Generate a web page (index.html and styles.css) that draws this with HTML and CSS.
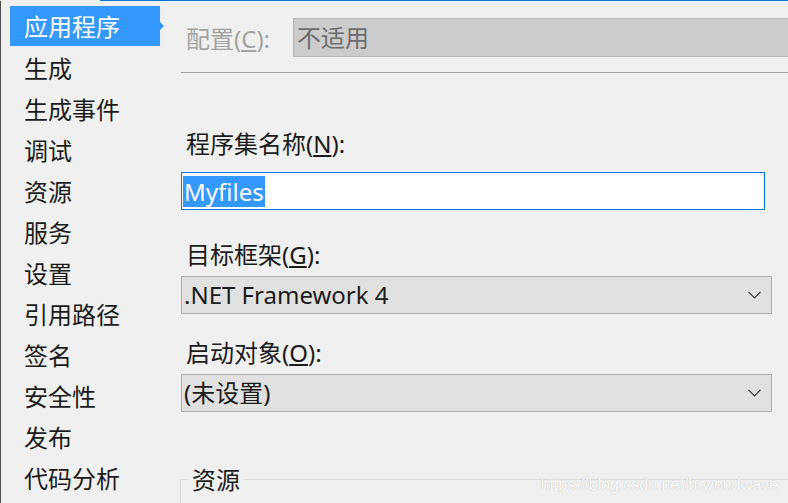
FILE: index.html
```html
<!DOCTYPE html>
<html lang="zh-CN">
<head>
<meta charset="utf-8">
<title>应用程序</title>
<link rel="stylesheet" href="styles.css">
</head>
<body>
<div class="topline"></div>
<div class="window">
  <nav class="sidebar">
    <div class="nav-item active">应用程序</div>
    <div class="nav-item">生成</div>
    <div class="nav-item">生成事件</div>
    <div class="nav-item">调试</div>
    <div class="nav-item">资源</div>
    <div class="nav-item">服务</div>
    <div class="nav-item">设置</div>
    <div class="nav-item">引用路径</div>
    <div class="nav-item">签名</div>
    <div class="nav-item">安全性</div>
    <div class="nav-item">发布</div>
    <div class="nav-item">代码分析</div>
  </nav>
  <main class="panel">
    <div class="config-row">
      <span class="config-label">配置(<u>C</u>):</span>
      <div class="config-box">不适用</div>
    </div>
    <div class="separator"></div>

    <div class="label label-first">程序集名称(<u>N</u>):</div>
    <div class="textbox"><span class="selection">Myfiles</span></div>

    <div class="label label-next">目标框架(<u>G</u>):</div>
    <div class="combo">
      <span class="combo-text">.NET Framework 4</span>
      <svg class="chevron" width="13" height="8" viewBox="0 0 13 8"><polyline points="0.5,0.8 6.5,6.8 12.5,0.8" fill="none" stroke="#333" stroke-width="1.2"/></svg>
    </div>

    <div class="label label-next2">启动对象(<u>O</u>):</div>
    <div class="combo">
      <span class="combo-text">(未设置)</span>
      <svg class="chevron" width="13" height="8" viewBox="0 0 13 8"><polyline points="0.5,0.8 6.5,6.8 12.5,0.8" fill="none" stroke="#333" stroke-width="1.2"/></svg>
    </div>

    <fieldset class="group">
      <legend class="group-title">资源</legend>
    </fieldset>
  </main>
</div>
<div class="watermark">https://blog.csdn.net/beyondwave</div>
</body>
</html>
```

FILE: styles.css
```css
html, body {
  margin: 0;
  padding: 0;
}

body {
  width: 788px;
  height: 503px;
  overflow: hidden;
  background: #f0f0f0;
  font-family: "Noto Sans", "Noto Sans CJK SC", sans-serif;
  font-size: 24px;
  color: #1b1b1b;
  position: relative;
}

.topline {
  height: 1px;
  margin-left: 100px;
  background: #0078d7;
}

.window {
  display: flex;
  height: 502px;
}

.sidebar {
  flex: none;
  width: 160px;
  box-sizing: border-box;
  border-left: 1px solid #4d4d4d;
  padding-top: 5px;
}

.nav-item {
  position: relative;
  height: 41px;
  line-height: 43px;
  margin-left: 9px;
  padding-left: 14px;
  white-space: nowrap;
}

.nav-item.active {
  background: #3399ff;
  color: #ffffff;
  height: 40px;
  line-height: 42px;
  margin-bottom: 1px;
}

.nav-item.active::after {
  content: "";
  position: absolute;
  right: -4px;
  top: 16px;
  border-left: 4px solid #3399ff;
  border-top: 4px solid transparent;
  border-bottom: 4px solid transparent;
}

.panel {
  flex: 1;
  display: flex;
  flex-direction: column;
  padding-left: 21px;
  min-width: 0;
}

.config-row {
  display: flex;
  align-items: center;
  margin-top: 17px;
  height: 39px;
  margin-right: -10px;
}

.config-label {
  width: 112px;
  flex: none;
  padding-left: 5px;
  box-sizing: border-box;
  color: #a3a3a3;
  white-space: nowrap;
}

.config-box {
  flex: 1;
  height: 39px;
  box-sizing: border-box;
  background: #cccccc;
  border: 1px solid #b8b8b8;
  line-height: 37px;
  padding-left: 3px;
  color: #6d6d6d;
}

.separator {
  margin-top: 15px;
  height: 1px;
  background: #a0a0a0;
  margin-right: -10px;
}

.label {
  height: 34px;
  line-height: 34px;
  padding-left: 5px;
  white-space: nowrap;
}

.label-first {
  margin-top: 54px;
}

.label-next {
  margin-top: 28px;
}

.label-next2 {
  margin-top: 22px;
}

.textbox {
  margin-top: 11px;
  width: 584px;
  height: 38px;
  box-sizing: border-box;
  background: #ffffff;
  border: 1px solid #0078d7;
  padding: 2px 1px;
}

.selection {
  display: inline-block;
  height: 31px;
  line-height: 31px;
  padding: 0 1px;
  background: #3399ff;
  color: #ffffff;
}

.combo {
  margin-top: 4px;
  width: 591px;
  height: 38px;
  box-sizing: border-box;
  background: #e1e1e1;
  border: 1px solid #adadad;
  display: flex;
  align-items: center;
  justify-content: space-between;
  padding: 0 10px 0 2px;
  line-height: 36px;
}

.combo-text {
  white-space: nowrap;
}

.chevron {
  display: block;
}

.group {
  margin: 51px -10px 0 -1px;
  padding: 0 0 0 7px;
  border: 1px solid #dcdcdc;
  border-right: none;
  border-bottom: none;
  height: 60px;
  min-width: 0;
}

.group-title {
  padding: 0 4px;
  line-height: 34px;
}

.watermark {
  position: absolute;
  right: 10px;
  bottom: 9px;
  font-family: "Liberation Sans", sans-serif;
  font-size: 16px;
  color: #fbfbfb;
  text-shadow: 0 0 1px #b0b0b0;
}
```
